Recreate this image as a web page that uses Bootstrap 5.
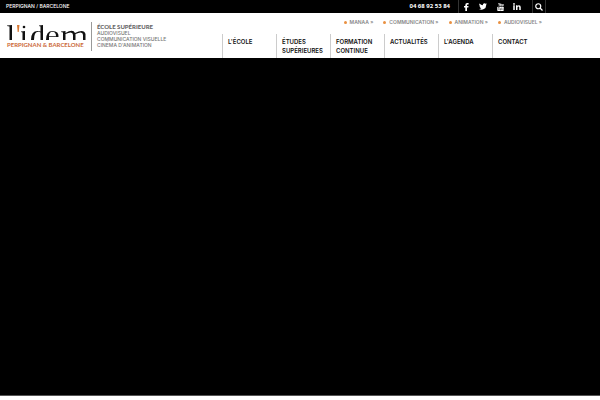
<!DOCTYPE html>
<html lang="fr">
<head>
<meta charset="utf-8">
<meta name="viewport" content="width=device-width, initial-scale=1">
<title>L'idem – Perpignan &amp; Barcelone</title>
<link rel="stylesheet" href="https://cdn.jsdelivr.net/npm/bootstrap@5.3.0/dist/css/bootstrap.min.css">
<style>
body { font-family: Inter, "Liberation Sans", sans-serif; background: #fff; }
a { text-decoration: none; }
.page { min-height: 100vh; }
.strip { height: 13px; background: #000; color: #fff; font-size: 5px; font-weight: 500; line-height: 13px; padding-left: 6px; padding-right: 54px; }
.phone { font: 700 6px/13px "Open Sans", sans-serif; padding-right: 8px; }
.social { border-left: 1px solid #333; border-right: 1px solid #333; padding-right: 5px; }
.social a { width: 17px; height: 13px; padding-right: 3px; }
.search { width: 13px; height: 13px; background: none; border: 0; border-right: 1px solid #333; padding: 0; }
.masthead { height: 45px; padding-left: 7px; padding-right: 54px; }
.brand { padding-top: 9px; color: inherit; }
.brand-name { font: 700 6px/9px Lato, sans-serif; color: #cb6836; white-space: nowrap; }
.brand-about { border-left: 1px solid #999; margin-left: 5px; padding: 2px 0 0 5px; height: 29px; font-size: 5px; font-weight: 500; line-height: 6px; color: #777; white-space: nowrap; }
.brand-about strong { font: 900 6px/6px Lato, sans-serif; color: #666; display: block; }
.menus { width: 324px; }
.courses { height: 21px; gap: 10px; padding: 6px 4px 0 0; font-size: 5px; font-weight: 600; line-height: 7px; }
.courses a { color: #888; white-space: nowrap; }
.courses a::before { content: ""; display: inline-block; width: 3px; height: 3px; border-radius: 50%; background: #e99040; margin-right: 3px; }
.mainmenu { height: 24px; }
.mainmenu a { flex: 1 1 0; border-left: 1px solid #ccc; padding: 3px 0 0 5px; color: #111; font-size: 6px; line-height: 9px; font-weight: 600; }
.stage { background: #000; }
.edge { height: 5px; border-top: 1px solid #555; background: #fff; }
</style>
<script src="https://cdn.jsdelivr.net/npm/bootstrap@5.3.0/dist/js/bootstrap.bundle.min.js"></script>
</head>
<body>
<div class="page d-flex flex-column">
<div class="strip d-flex justify-content-between">
<span>PERPIGNAN / BARCELONE</span>
<div class="d-flex">
<span class="phone">04 68 92 53 84</span>
<nav class="social d-flex" aria-label="Réseaux sociaux">
<a class="d-flex align-items-center justify-content-center" href="#" aria-label="Facebook"><svg width="5" height="8" viewBox="0 0 5 8" fill="#fff"><path d="M1.3 8V4.500H0V3h1.300V2Q1.300 0 3.300 0H4.600V1.400H3.700Q3 1.400 3 2V3H4.500L4.300 4.500H3V8z"/></svg></a>
<a class="d-flex align-items-center justify-content-center" href="#" aria-label="Twitter"><svg width="8" height="7" viewBox="0 0 24 20" fill="#fff"><path d="M24 2.400a10 10 0 0 1-2.800.8A5 5 0 0 0 23.300 .5a10 10 0 0 1-3.100 1.200A4.900 4.900 0 0 0 11.800 6.200 14 14 0 0 1 1.700 1a4.900 4.900 0 0 0 1.500 6.600A5 5 0 0 1 1 7v.1A4.900 4.900 0 0 0 4.900 12a5 5 0 0 1-2.200.1A4.900 4.900 0 0 0 7.300 15.500 10 10 0 0 1 0 17.500 14 14 0 0 0 21.500 5z"/></svg></a>
<a class="d-flex align-items-center justify-content-center" href="#" aria-label="YouTube"><svg width="7" height="8" viewBox="0 0 14 16" fill="none" stroke="#fff" stroke-width="1.400"><path d="M3 0l1.500 3.500L6 0M4.500 3.500V6M7 2h1.500v3.500H7zM10.500 2v3.500h2V2"/><rect x=".5" y="7.500" width="13" height="8.500" rx="1.500" fill="#fff" stroke="none"/><path d="M2 9h3M3.500 9v5M6 10.500V14h1.500v-3.500M9.500 9v5M12 11v3" stroke="#000" stroke-width=".8"/></svg></a>
<a class="d-flex align-items-center justify-content-center" href="#" aria-label="LinkedIn"><svg width="8" height="7" viewBox="0 0 16 14" fill="#fff"><circle cx="2" cy="1.800" r="1.800"/><path d="M.5 4.500h3V14h-3zM6 4.500h3v1.300Q10 4.300 12 4.300q3.500 0 3.500 4V14h-3V9q0-2.200-1.600-2.200Q9 6.800 9 9v5H6z"/></svg></a>
</nav>
<button class="search d-flex align-items-center justify-content-center" type="button" aria-label="Rechercher"><svg width="8" height="8" viewBox="0 0 16 16" fill="none" stroke="#fff" stroke-width="2.400"><circle cx="6.500" cy="6.500" r="5"/><path d="M10 10l5 5"/></svg></button>
</div>
</div>
<header class="masthead d-flex justify-content-between">
<a href="#" class="brand d-flex" aria-label="L'idem">
<div>
<svg class="d-block" width="79" height="18" viewBox="0 0 79 18" fill="#111"><path d="M0 3.500L5 3V18H2.500V4.500L0 4zM14 9.500L18 9V18H15.500V10.500L14 10zM32 3.500L36 3V18H33.500V4.500L32 4z"/><circle cx="17" cy="5" r="1.300"/><path d="M10 3h2.500L11.700 10h-1z" fill="#d97832"/><path d="M34 10.500Q27 7.500 27 18H24Q24 7 34 9.500zM39 18Q39 9 45.500 9T51.500 15H42V18zM42 14.300H49Q49 9.700 45.500 9.700T42 14.300zM54 9.500L58.500 9V11Q66 6.500 68 11Q77 6.500 78.500 12V18H76V13Q76 8.500 68.500 12V18H66V13Q66 8.500 58.500 12V18H56V10.500L54 10z"/></svg>
<div class="brand-name">PERPIGNAN &amp; BARCELONE</div>
</div>
<div class="brand-about"><strong>ÉCOLE SUPÉRIEURE</strong>AUDIOVISUEL<br>COMMUNICATION VISUELLE<br>CINÉMA D'ANIMATION</div>
</a>
<div class="menus">
<nav class="courses d-flex justify-content-end" aria-label="Filières"><a href="#">MANAA »</a><a href="#">COMMUNICATION »</a><a href="#">ANIMATION »</a><a href="#">AUDIOVISUEL »</a></nav>
<nav class="mainmenu d-flex" aria-label="Menu principal"><a href="#">L'ÉCOLE</a><a href="#">ÉTUDES SUPÉRIEURES</a><a href="#">FORMATION CONTINUE</a><a href="#">ACTUALITÉS</a><a href="#">L'AGENDA</a><a href="#">CONTACT</a></nav>
</div>
</header>
<main class="stage flex-grow-1"></main>
<footer class="edge"></footer>
</div>
</body>
</html>
